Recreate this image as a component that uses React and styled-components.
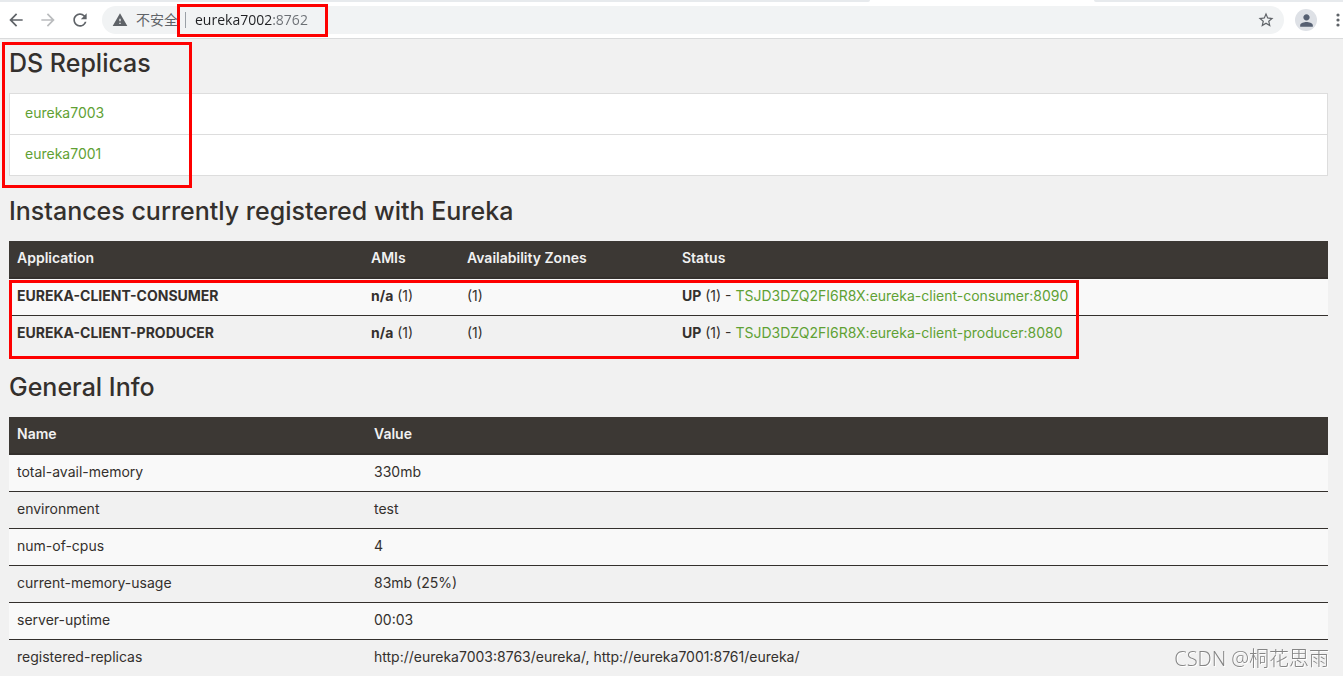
import React, { useState } from 'react'
import styled, { createGlobalStyle } from "styled-components";
import { MdArrowBack, MdArrowForward, MdRefresh, MdWarning, MdStarBorder, MdPerson } from "react-icons/md";

const GlobalStyle = createGlobalStyle`
* {
  box-sizing: border-box;
}
body {
  margin: 0;
  background-color: #f1f1f1;
  color: #34302d;
  font-family: Inter, "Open Sans", sans-serif;
  font-size: 14px;
  line-height: 20px;
}
`

const TabStrip = styled.div`
display: flex;
height: 2px;
background-color: #fff;
`
const TabArea = styled.div`
flex: ${(props) => props.$grow} 1 0;
background-color: #e7eaed;
border-radius: ${(props) => (props.$side === "left" ? "0 0 4px 0" : "0 0 0 4px")};
`
const ActiveTab = styled.div`
width: 224px;
`
const Toolbar = styled.header`
display: flex;
align-items: center;
height: 37px;
padding-left: 6px;
background-color: #fff;
border-bottom: 1px solid #dadbdc;
`
const NavButtons = styled.nav`
display: flex;
gap: 12px;
margin-right: 12px;
`
const IconButton = styled.button`
display: flex;
padding: 0;
border: none;
background: none;
color: ${(props) => (props.disabled ? "#babcbe" : "#5f6368")};
`
const AddressBar = styled.div`
display: flex;
flex: 1;
align-items: center;
height: 28px;
padding: 0 9px 0 10px;
border-radius: 14px;
background-color: #f1f3f4;
color: #5f6368;
font-family: "Open Sans", "Noto Sans CJK SC", sans-serif;
`
const SecurityLabel = styled.span`
margin-left: 8px;
`
const AddressField = styled.div`
position: relative;
display: flex;
flex: 1;
align-items: center;
height: 28px;
padding-left: 7px;
`
const Divider = styled.span`
width: 1px;
height: 16px;
margin-right: 9px;
background-color: #9aa0a6;
`
// host is dark, the port after it is grey
const AddressInput = styled.input`
flex: 1;
min-width: 0;
height: 22px;
margin-bottom: 2px;
padding: 0;
border: none;
outline: none;
background-image: linear-gradient(90deg, #202124 77px, #6b6f74 77px);
background-clip: text;
color: transparent;
caret-color: #202124;
font: inherit;
`
const Avatar = styled.button`
display: flex;
align-items: center;
justify-content: center;
width: 22px;
height: 22px;
margin: 0 16px 0 11px;
padding: 0;
border: none;
border-radius: 50%;
background-color: #dee1e6;
color: #566072;
`
const Highlight = styled.div`
position: absolute;
top: ${(props) => props.$top}px;
left: ${(props) => props.$left}px;
width: ${(props) => props.$width}px;
height: ${(props) => props.$height}px;
border: 3px solid #fe0000;
pointer-events: none;
`

const Page = styled.main`
padding: 0 15px 0 9px;
`
const Section = styled.section`
position: relative;
`
const Title = styled.h1`
margin: 0;
padding: ${(props) => (props.$first ? "11px" : "22px")} 0 17px;
font-size: 25px;
font-weight: 500;
line-height: 26px;
`
const ReplicaList = styled.ul`
margin: 0;
padding: 0;
list-style: none;
border: 1px solid #ddd;
background-color: #fff;
`
const ReplicaItem = styled.li`
height: 40px;
padding: 9px 15px;
& + & {
  height: 41px;
  border-top: 1px solid #ddd;
}
`
const Link = styled.a`
color: #5fa134;
text-decoration: none;
`
const Table = styled.table`
width: 100%;
table-layout: fixed;
border-spacing: 0;
`
const HeadCell = styled.th`
width: ${(props) => (props.$width ? props.$width + "px" : "auto")};
height: 38px;
padding: 7px 8px 9px;
border-bottom: 2px solid #34302d;
background-color: #3c3834;
color: #f1f1f1;
font-weight: 600;
line-height: 20px;
text-align: left;
`
const Row = styled.tr`
&:nth-child(odd) {
  background-color: #f9f9f9;
}
& + & td {
  border-top: 1px solid #34302d;
}
`
const Cell = styled.td`
padding: 7px 8px 9px;
line-height: 20px;
`
const Watermark = styled.div`
position: fixed;
right: 14px;
bottom: 3px;
color: #858585;
font-family: "Open Sans", "Noto Sans CJK SC", sans-serif;
font-size: 20px;
font-weight: 300;
line-height: 28px;
text-shadow: 1px 1px 0 #fff;
`

const replicas = ["eureka7003", "eureka7001"]

const instances = [
    { name: "EUREKA-CLIENT-CONSUMER", link: "TSJD3DZQ2FI6R8X:eureka-client-consumer:8090" },
    { name: "EUREKA-CLIENT-PRODUCER", link: "TSJD3DZQ2FI6R8X:eureka-client-producer:8080" },
]

const generalInfo = [
    ["total-avail-memory", "330mb"],
    ["environment", "test"],
    ["num-of-cpus", "4"],
    ["current-memory-usage", "83mb (25%)"],
    ["server-uptime", "00:03"],
    ["registered-replicas", "http://eureka7003:8763/eureka/, http://eureka7001:8761/eureka/"],
]

function BrowserBar() {
    const [address, setAddress] = useState("eureka7002:8762")

    return (
        <>
            <TabStrip>
                <TabArea $grow={870} $side="left" />
                <ActiveTab />
                <TabArea $grow={249} $side="right" />
            </TabStrip>
            <Toolbar>
                <NavButtons>
                    <IconButton aria-label="Back"><MdArrowBack size={20} /></IconButton>
                    <IconButton aria-label="Forward" disabled><MdArrowForward size={20} /></IconButton>
                    <IconButton aria-label="Reload"><MdRefresh size={20} /></IconButton>
                </NavButtons>
                <AddressBar>
                    <MdWarning size={16} />
                    <SecurityLabel>不安全</SecurityLabel>
                    <AddressField>
                        <Divider />
                        <AddressInput
                            aria-label="Address"
                            value={address}
                            onChange={(e) => setAddress(e.target.value)}
                        />
                        <Highlight $top={-2} $left={-1} $width={151} $height={33} />
                    </AddressField>
                    <IconButton aria-label="Bookmark"><MdStarBorder size={18} /></IconButton>
                </AddressBar>
                <Avatar aria-label="Profile"><MdPerson size={19} /></Avatar>
                <IconButton aria-label="Menu">
                    <svg width="10" height="18" viewBox="0 0 10 18" fill="currentColor">
                        <circle cx="5" cy="4" r="1.6" />
                        <circle cx="5" cy="9" r="1.6" />
                        <circle cx="5" cy="14" r="1.6" />
                    </svg>
                </IconButton>
            </Toolbar>
        </>
    )
}

export default function App() {
    return (
        <div>
            <GlobalStyle />
            <BrowserBar />
            <Page>
                <Section>
                    <Title $first>DS Replicas</Title>
                    <ReplicaList>
                        {replicas.map((name) => (
                            <ReplicaItem key={name}><Link href={"#" + name}>{name}</Link></ReplicaItem>
                        ))}
                    </ReplicaList>
                    <Highlight $top={3} $left={-7} $width={190} $height={146} />
                </Section>
                <Section>
                    <Title>Instances currently registered with Eureka</Title>
                    <Table>
                        <thead>
                            <tr>
                                <HeadCell $width={354}>Application</HeadCell>
                                <HeadCell $width={96}>AMIs</HeadCell>
                                <HeadCell $width={215}>Availability Zones</HeadCell>
                                <HeadCell>Status</HeadCell>
                            </tr>
                        </thead>
                        <tbody>
                            {instances.map((item) => (
                                <Row key={item.name}>
                                    <Cell><b>{item.name}</b></Cell>
                                    <Cell><b>n/a</b> (1)</Cell>
                                    <Cell>(1)</Cell>
                                    <Cell><b>UP</b> (1) - <Link href={"#" + item.name}>{item.link}</Link></Cell>
                                </Row>
                            ))}
                        </tbody>
                    </Table>
                    <Highlight $top={104} $left={0} $width={1070} $height={79} />
                </Section>
                <Section>
                    <Title>General Info</Title>
                    <Table>
                        <thead>
                            <tr>
                                <HeadCell $width={357}>Name</HeadCell>
                                <HeadCell>Value</HeadCell>
                            </tr>
                        </thead>
                        <tbody>
                            {generalInfo.map(([name, value]) => (
                                <Row key={name}>
                                    <Cell>{name}</Cell>
                                    <Cell>{value}</Cell>
                                </Row>
                            ))}
                        </tbody>
                    </Table>
                </Section>
            </Page>
            <Watermark>CSDN @桐花思雨</Watermark>
        </div>
    )
}
